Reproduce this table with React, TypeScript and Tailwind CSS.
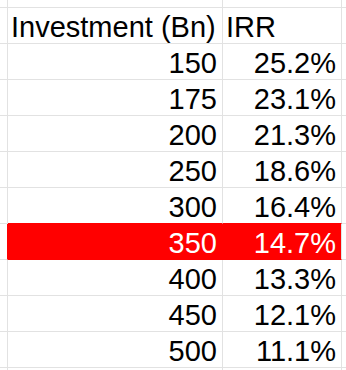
import React from 'react';

interface Row {
  investment: number;
  irr: string;
  highlight?: boolean;
}

const ROWS: Row[] = [
  { investment: 150, irr: '25.2%' },
  { investment: 175, irr: '23.1%' },
  { investment: 200, irr: '21.3%' },
  { investment: 250, irr: '18.6%' },
  { investment: 300, irr: '16.4%' },
  { investment: 350, irr: '14.7%', highlight: true },
  { investment: 400, irr: '13.3%' },
  { investment: 450, irr: '12.1%' },
  { investment: 500, irr: '11.1%' },
];

// one grid row: gutter | col A | col B | gutter
function SheetRow({
  a,
  b,
  header = false,
  highlight = false,
  nextHighlight = false,
}: {
  a: React.ReactNode;
  b: React.ReactNode;
  header?: boolean;
  highlight?: boolean;
  nextHighlight?: boolean;
}) {
  const bottom = highlight || nextHighlight ? 'border-b-[#ff0000]' : 'border-b-[#e2e2e2]';
  const fill = highlight ? 'bg-[#ff0000] text-white' : 'bg-white text-black';
  const align = header ? 'justify-start pl-[3px]' : 'justify-end pr-[5px]';
  const divider = highlight ? 'border-r-[#ff0000]' : 'border-r-[#e2e2e2]';

  return (
    <div className="flex h-[36px]">
      <div className={`w-[8px] shrink-0 border-b border-r border-b-[#e2e2e2] ${divider}`} />
      <div className={`flex w-[215px] shrink-0 items-end border-b border-r ${divider} ${bottom} ${fill} ${align}`}>
        {a}
      </div>
      <div className={`flex w-[119px] shrink-0 items-end border-b border-r border-r-[#e2e2e2] ${bottom} ${fill} ${align}`}>
        {b}
      </div>
      <div className="w-[4px] shrink-0 border-b border-b-[#e2e2e2]" />
    </div>
  );
}

export default function App() {
  return (
    <div className="h-[370px] w-[346px] overflow-hidden bg-white font-['Liberation_Sans',Arial,sans-serif] text-[29px] leading-[32px]">
      <div className="flex h-[8px]">
        <div className="w-[8px] shrink-0 border-b border-r border-[#e2e2e2]" />
        <div className="w-[215px] shrink-0 border-b border-r border-[#e2e2e2]" />
        <div className="w-[119px] shrink-0 border-b border-r border-[#e2e2e2]" />
        <div className="w-[4px] shrink-0 border-b border-[#e2e2e2]" />
      </div>
      <SheetRow header a="Investment (Bn)" b="IRR" />
      {ROWS.map((row, i) => (
        <SheetRow
          key={row.investment}
          a={row.investment}
          b={row.irr}
          highlight={row.highlight}
          nextHighlight={ROWS[i + 1]?.highlight}
        />
      ))}
      <div className="flex h-[10px]">
        <div className="w-[8px] shrink-0 border-r border-[#e2e2e2]" />
        <div className="w-[215px] shrink-0 border-r border-[#e2e2e2]" />
        <div className="w-[119px] shrink-0 border-r border-[#e2e2e2]" />
      </div>
    </div>
  );
}
